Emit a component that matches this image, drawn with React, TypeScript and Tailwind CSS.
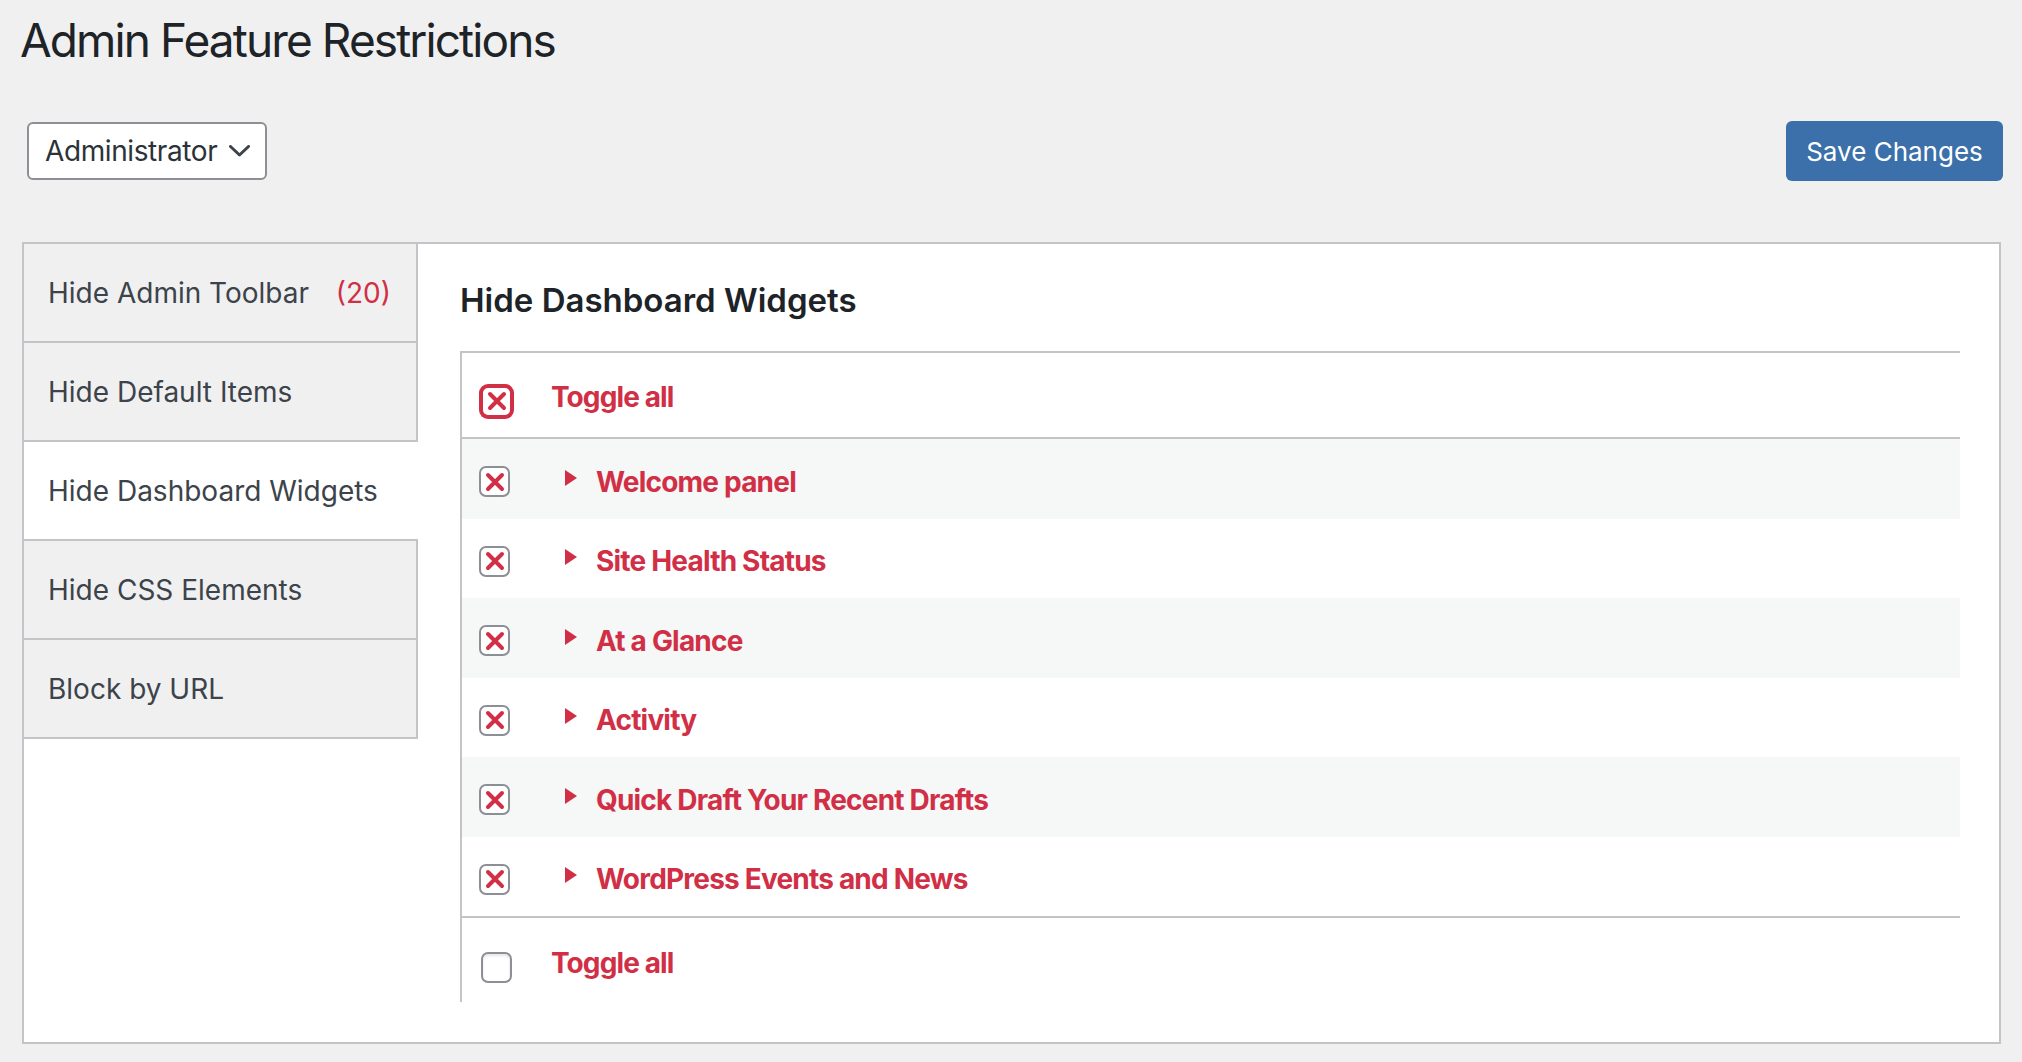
import { Fragment } from 'react'

const red = 'text-[#d12f46]'

const tabs = [
  { label: 'Hide Admin Toolbar', count: 20 },
  { label: 'Hide Default Items' },
  { label: 'Hide Dashboard Widgets', active: true },
  { label: 'Hide CSS Elements' },
  { label: 'Block by URL' },
]

const widgets = [
  'Welcome panel',
  'Site Health Status',
  'At a Glance',
  'Activity',
  'Quick Draft Your Recent Drafts',
  'WordPress Events and News',
]

function Cross() {
  return (
    <svg width="22" height="22" viewBox="0 0 22 22" fill="none">
      <path d="M4 4 L18 18 M18 4 L4 18" stroke="#d12f46" strokeWidth="4" strokeLinecap="round" />
    </svg>
  )
}

function Check({ state, focused }: { state: 'x' | 'empty'; focused?: boolean }) {
  return (
    <span
      className={`flex h-[31px] w-[31px] shrink-0 items-center justify-center rounded-[7px] border-2 bg-white ${
        focused ? 'border-[#d12f46] shadow-[0_0_0_2px_#d12f46]' : 'border-[#8c8f94]'
      } ${state === 'empty' ? 'shadow-[inset_0_2px_3px_rgba(0,0,0,0.1)]' : ''}`}
    >
      {state === 'x' && <Cross />}
    </span>
  )
}

export default function App() {
  return (
    <div
      className="min-h-[1062px] bg-[#f0f0f1] pl-[20px] pr-[19px] pt-[10px] text-[#3c434a]"
      style={{ fontFamily: 'Inter, "Noto Sans", sans-serif' }}
    >
      <h1 className="text-[46px] font-normal leading-[60px] tracking-[-1.9px] text-[#1d2327]">Admin Feature Restrictions</h1>

      {/* Role + save */}
      <div className="mt-[51px] flex h-[60px] items-center justify-between">
        <div className="ml-[7px] flex h-[58px] w-[240px] items-center justify-between rounded-[6px] border-2 border-[#8c8f94] bg-white pl-[16px] pr-[15px]">
          <span className="text-[28px] leading-none tracking-[-0.4px] text-[#2c3338]">Administrator</span>
          <svg width="21" height="12" viewBox="0 0 21 12" fill="none">
            <polyline points="1.5,1.5 10.5,10 19.5,1.5" stroke="#3c434a" strokeWidth="3" strokeLinecap="round" strokeLinejoin="round" />
          </svg>
        </div>
        <button className="h-[60px] w-[217px] rounded-[6px] bg-[#3b70aa] text-[26px] text-white">Save Changes</button>
      </div>

      {/* ── Panel ─────────────────────────────────── */}
      <div className="mx-[2px] mt-[61px] flex border-2 border-[#c3c4c7] bg-white">
        <div className="w-[394px] shrink-0">
          {tabs.map((t) => (
            <div
              key={t.label}
              className={`flex h-[99px] items-center justify-between border-b-2 border-[#c3c4c7] pl-[24px] pr-[25px] text-[28px] ${
                t.active ? 'bg-white' : 'border-r-2 bg-[#f0f0f1]'
              }`}
            >
              <span>{t.label}</span>
              {t.count && <span className={red}>({t.count})</span>}
            </div>
          ))}
        </div>

        <div className="flex-1 pb-[40px] pl-[42px] pr-[39px] pt-[34px]">
          <h2 className="mb-[29px] text-[33px] font-semibold leading-[44px] text-[#1d2327]">Hide Dashboard Widgets</h2>

          <div className="border-l-2 border-t-2 border-[#c3c4c7]">
            <div className="flex h-[86px] items-center border-b-2 border-[#c3c4c7] pl-[19px] pt-[4px]">
              <span className="mt-[8px]">
                <Check state="x" focused />
              </span>
              <span className={`ml-[39px] text-[28px] font-bold tracking-[-0.9px] ${red}`}>Toggle all</span>
            </div>

            <div className="border-b-2 border-[#c3c4c7]">
              {widgets.map((w, i) => (
                <Fragment key={w}>
                  <div className={`flex h-[79.5px] items-center pl-[17px] pt-[6px] ${i % 2 === 0 ? 'bg-[#f6f7f7]' : 'bg-white'}`}>
                    <Check state="x" />
                    <svg className="-mt-[8px] ml-[55px]" width="12" height="16" viewBox="0 0 12 16">
                      <polygon points="0,0 12,8 0,16" fill="#d12f46" />
                    </svg>
                    <span className={`ml-[19px] text-[28px] font-bold tracking-[-0.8px] ${red}`}>{w}</span>
                  </div>
                </Fragment>
              ))}
            </div>

            <div className="flex h-[84px] items-center pl-[19px] pt-[6px]">
              <span className="mt-[8px]">
                <Check state="empty" />
              </span>
              <span className={`ml-[39px] text-[28px] font-bold tracking-[-0.9px] ${red}`}>Toggle all</span>
            </div>
          </div>
        </div>
      </div>
    </div>
  )
}
